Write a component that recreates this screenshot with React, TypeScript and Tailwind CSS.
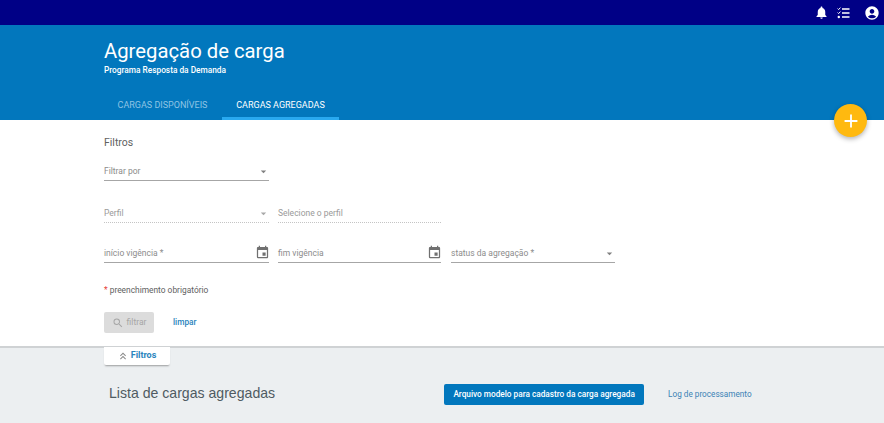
import React from "react";
import { MdNotifications, MdAccountCircle, MdEvent, MdSearch, MdAdd, MdKeyboardDoubleArrowUp, MdArrowDropDown } from "react-icons/md";

const font = { fontFamily: "Roboto, 'Liberation Sans', sans-serif" };

function TaskList() {
  return (
    <svg width="13" height="12" viewBox="0 0 13 12" fill="none" stroke="white">
      <path d="M0.6 1.6 L1.6 2.6 L3.4 0.6" strokeWidth="1" />
      <path d="M0.6 5.6 L1.6 6.6 L3.4 4.6" strokeWidth="1" />
      <circle cx="1.8" cy="10" r="1.2" fill="white" stroke="none" />
      <path d="M5 2 H12.5 M5 6 H12.5 M5 10 H12.5" strokeWidth="1.6" />
    </svg>
  );
}

function Field({ label, kind, dotted, width }: { label: string; kind?: "select" | "date"; dotted?: boolean; width: string }) {
  return (
    <div className={`flex h-[18px] items-center justify-between ${width} ${dotted ? "border-b border-dotted border-[#c4c4c4]" : "border-b border-[#a6a6a6]"}`}>
      <span className={`text-[8.5px] ${dotted ? "text-[#9a9a9a]" : "text-[#8c8c8c]"}`}>{label}</span>
      {kind === "select" && <MdArrowDropDown className={`mr-[-1px] text-[13px] ${dotted ? "text-[#a8a8a8]" : "text-[#808080]"}`} />}
      {kind === "date" && <MdEvent className="mr-[-1px] mb-[2px] text-[15px] text-[#707070]" />}
    </div>
  );
}

export default function App() {
  return (
    <div className="relative flex h-[423px] w-[884px] flex-col overflow-hidden bg-white" style={font}>
      <header className="flex h-[25px] items-center justify-end bg-[#000086] pr-[4px] text-white">
        <MdNotifications className="text-[15px]" />
        <span className="ml-[8px]"><TaskList /></span>
        <MdAccountCircle className="ml-[14px] text-[16px]" />
      </header>

      <section className="flex h-[95px] flex-col bg-[#0277bd] pl-[104px] text-white">
        <h1 className="mt-[13px] text-[20.3px] leading-[27px] font-normal">Agregação de carga</h1>
        <p className="text-[8.3px] leading-[10px] font-medium">Programa Resposta da Demanda</p>
        <nav className="mt-auto flex text-[9px]">
          <div className="flex h-[29px] w-[118px] items-center justify-center pr-[1px] text-[#8fc4e4]">CARGAS DISPONÍVEIS</div>
          <div className="flex h-[29px] w-[117px] items-center justify-center border-b-[3px] border-[#29a9f0] pt-[3px]">CARGAS AGREGADAS</div>
        </nav>
      </section>

      <main className="flex h-[228px] flex-col border-b-2 border-[#cfd2d4] pl-[104px]">
        <h2 className="mt-[16px] text-[10.5px] leading-[14px] font-normal text-[#616161]">Filtros</h2>
        <div className="mt-[13px]"><Field width="w-[165px]" label="Filtrar por" kind="select" /></div>
        <div className="mt-[24px] flex">
          <Field width="w-[165px]" dotted label="Perfil" kind="select" />
          <div className="ml-[9px]"><Field width="w-[163px]" dotted label="Selecione o perfil" /></div>
        </div>
        <div className="mt-[22px] flex">
          <Field width="w-[165px]" label="início vigência *" kind="date" />
          <div className="ml-[9px]"><Field width="w-[163px]" label="fim vigência" kind="date" /></div>
          <div className="ml-[10px]"><Field width="w-[164px]" label="status da agregação *" kind="select" /></div>
        </div>
        <p className="mt-[21px] text-[8.4px] leading-[12px] text-[#616161]"><span className="text-[#e53935]">*</span> preenchimento obrigatório</p>
        <div className="mt-[16px] flex items-center">
          <button className="flex h-[21px] w-[50px] items-center justify-center gap-[3px] rounded-[2px] bg-[#dcdcdc] text-[8.5px] text-[#a6a6a6]">
            <MdSearch className="text-[12px]" />filtrar
          </button>
          <a className="ml-[19px] text-[8.3px] font-medium text-[#2a84bd]">limpar</a>
        </div>
      </main>

      <section className="relative flex grow items-start bg-[#eceff1]">
        <div className="absolute top-[-1px] left-[104px] flex h-[18px] w-[66px] items-center justify-center gap-[2px] rounded-b-[2px] bg-white pr-[1px] text-[9px] font-bold text-[#2a84bd] shadow-[0_2px_2px_-1px_rgba(0,0,0,0.35)]">
          <MdKeyboardDoubleArrowUp className="text-[12px] text-[#8a8a8a]" />Filtros
        </div>
        <h2 className="mt-[36px] ml-[109px] text-[14.1px] leading-[18px] font-normal text-[#4f5b62]" style={{ fontFamily: "'Liberation Sans', sans-serif" }}>Lista de cargas agregadas</h2>
        <button className="mt-[36px] ml-[169px] h-[21px] w-[200px] rounded-[2px] bg-[#0277bd] text-[8.25px] font-medium text-white">Arquivo modelo para cadastro da carga agregada</button>
        <a className="mt-[40px] ml-[24px] text-[8.2px] leading-[12px] text-[#3b82b5]">Log de processamento</a>
      </section>

      <button className="absolute top-[104px] left-[834px] flex size-[33px] items-center justify-center rounded-full bg-[#ffb90f] text-white shadow-[0_2px_5px_rgba(0,0,0,0.3)]">
        <MdAdd className="text-[22px]" />
      </button>
    </div>
  );
}
